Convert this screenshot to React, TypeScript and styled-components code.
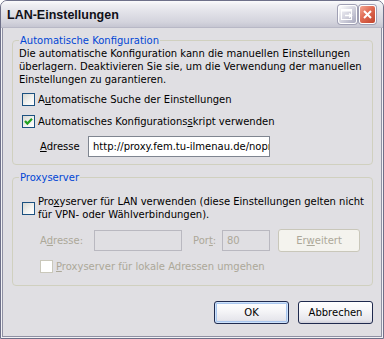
import React from "react";
import styled, { createGlobalStyle, css } from "styled-components";

const GlobalStyle = createGlobalStyle`
  html, body {
    margin: 0;
    padding: 0;
    background: #ffffff;
  }
  * {
    box-sizing: border-box;
  }
`;

const Window = styled.div`
  width: 384px;
  height: 339px;
  display: flex;
  flex-direction: column;
  border: 1px solid #6e7089;
  border-radius: 7px 7px 0 0;
  overflow: hidden;
  background: #e0dfe3;
  font-family: "DejaVu Sans", Tahoma, sans-serif;
  font-size: 10px;
  color: #000;
`;

const TitleBar = styled.div`
  height: 27px;
  flex: none;
  display: flex;
  align-items: center;
  padding: 0 7px 0 6px;
  background: linear-gradient(
    to bottom,
    #fbfbfc 0%,
    #eeeef2 15%,
    #e1e1e8 45%,
    #d4d4dd 80%,
    #c6c6d2 100%
  );
  border-bottom: 1px solid #b8b8c6;
`;

const Title = styled.span`
  flex: 1;
  font-family: "Liberation Sans", Arial, sans-serif;
  font-weight: bold;
  font-size: 12.5px;
  color: #101018;
  padding-top: 1px;
`;

const CaptionButton = styled.div<{ $close?: boolean }>`
  width: ${(p) => (p.$close ? 17 : 19)}px;
  height: 19px;
  margin-left: 2px;
  border-radius: 3px;
  border: 1px solid #ffffff;
  box-shadow: 0 0 0 1px #a0a0b4;
  display: flex;
  align-items: center;
  justify-content: center;
  background: ${(p) =>
    p.$close
      ? "linear-gradient(135deg, #f4a894 0%, #e06a52 45%, #c1442d 100%)"
      : "linear-gradient(135deg, #ffffff 0%, #d8d8e2 45%, #a8a8bd 100%)"};
`;

const Body = styled.div`
  flex: 1;
  display: flex;
  flex-direction: column;
  padding: 6px 9px 0 10px;
  border: 1px solid #f2f2f5;
  border-top: none;
  box-shadow: inset 1px 0 #8f90a3, inset -1px 0 #8f90a3, inset 0 -1px #8f90a3;
`;

const Group = styled.fieldset<{ $bottom: number; $top?: number }>`
  margin: ${(p) => p.$top ?? 0}px 0 0 0;
  padding: 0 6px ${(p) => p.$bottom}px 6px;
  border: 1px solid #d0d0bf;
  border-radius: 4px;
  min-width: 0;
`;

const Legend = styled.legend`
  margin-left: 0;
  padding: 0 1px;
  line-height: 13px;
  color: #0046d5;
`;

const Text = styled.div`
  line-height: 13px;
  white-space: nowrap;
`;

const CheckRow = styled.div<{ $indent: number; $top: number }>`
  display: flex;
  align-items: center;
  gap: 3px;
  margin-left: ${(p) => p.$indent}px;
  margin-top: ${(p) => p.$top}px;
  line-height: 13px;
  white-space: nowrap;
`;

const Box = styled.span<{ $disabled?: boolean }>`
  width: 13px;
  height: 13px;
  flex: none;
  display: flex;
  align-items: center;
  justify-content: center;
  border: 1px solid ${(p) => (p.$disabled ? "#cac8bb" : "#1c5180")};
  background: ${(p) =>
    p.$disabled
      ? "#ffffff"
      : "linear-gradient(135deg, #d8d8d2 0%, #f4f4f2 60%, #ffffff 100%)"};
`;

const Label = styled.span<{ $disabled?: boolean }>`
  color: ${(p) => (p.$disabled ? "#aca899" : "#000")};
  u {
    text-decoration: underline;
    text-underline-offset: 1px;
  }
`;

const FieldRow = styled.div<{ $indent: number; $top: number }>`
  display: flex;
  align-items: center;
  margin-left: ${(p) => p.$indent}px;
  margin-top: ${(p) => p.$top}px;
`;

const FieldLabel = styled(Label)<{ $width: number; $gap?: number }>`
  width: ${(p) => p.$width}px;
  margin-left: ${(p) => p.$gap ?? 0}px;
  flex: none;
`;

const Input = styled.div<{ $width: number; $disabled?: boolean }>`
  width: ${(p) => p.$width}px;
  height: 21px;
  flex: none;
  display: flex;
  align-items: center;
  padding-left: 4px;
  overflow: hidden;
  white-space: nowrap;
  ${(p) =>
    p.$disabled
      ? css`
          border: 1px solid #b9b8c0;
          background: #e0dfe3;
          color: #aca899;
        `
      : css`
          border: 1px solid #7f8590;
          background: #ffffff;
          color: #000;
        `}
`;

const Button = styled.div<{
  $width: number;
  $default?: boolean;
  $disabled?: boolean;
  $gap?: number;
}>`
  width: ${(p) => p.$width}px;
  height: 23px;
  margin-left: ${(p) => p.$gap ?? 0}px;
  flex: none;
  display: flex;
  align-items: center;
  justify-content: center;
  border-radius: 3px;
  ${(p) =>
    p.$disabled
      ? css`
          border: 1px solid #c9c7ba;
          background: #f4f3ee;
          color: #aca899;
        `
      : css`
          border: 1px solid #1f2a4e;
          background: linear-gradient(
            to bottom,
            #ffffff 0%,
            #f6f6f8 40%,
            #e6e6ec 85%,
            #cfcfd9 100%
          );
          color: #000;
        `}
  ${(p) =>
    p.$default &&
    css`
      box-shadow: inset 0 0 0 1px #cde2fb, inset 0 0 0 2px #a9c6ee;
    `}
`;

const Footer = styled.div`
  display: flex;
  justify-content: flex-end;
  gap: 9px;
  margin-top: 15px;
`;

function Check({ checked, disabled }: { checked?: boolean; disabled?: boolean }) {
  return (
    <Box $disabled={disabled}>
      {checked && (
        <svg width="9" height="9" viewBox="0 0 9 9">
          <path
            d="M1 4 L3.4 6.6 L8 1.8"
            fill="none"
            stroke="#21a121"
            strokeWidth="2.2"
          />
        </svg>
      )}
    </Box>
  );
}

export default function App() {
  return (
    <>
      <GlobalStyle />
      <Window>
        <TitleBar>
          <Title>LAN-Einstellungen</Title>
          <CaptionButton>
            <svg width="13" height="11" viewBox="0 0 13 11">
              <rect x="0.5" y="0.5" width="10" height="10" fill="none" stroke="#ffffff" />
              <rect x="0.5" y="0.5" width="10" height="2" fill="#ffffff" />
              <path d="M4 6.5 H10 M8 4.5 L10.5 6.5 L8 8.5" fill="none" stroke="#ffffff" strokeWidth="1.4" />
            </svg>
          </CaptionButton>
          <CaptionButton $close>
            <svg width="11" height="11" viewBox="0 0 11 11">
              <path d="M2 2 L9 9 M9 2 L2 9" stroke="#ffffff" strokeWidth="2" />
            </svg>
          </CaptionButton>
        </TitleBar>
        <Body>
          <Group $bottom={7}>
            <Legend>Automatische Konfiguration</Legend>
            <Text>
              Die automatische Konfiguration kann die manuellen Einstellungen
              <br />
              überlagern. Deaktivieren Sie sie, um die Verwendung der manuellen
              <br />
              Einstellungen zu garantieren.
            </Text>
            <CheckRow $indent={3} $top={7}>
              <Check />
              <Label>
                A<u>u</u>tomatische Suche der Einstellungen
              </Label>
            </CheckRow>
            <CheckRow $indent={3} $top={9}>
              <Check checked />
              <Label>
                Automatisches Konfigurations<u>s</u>kript verwenden
              </Label>
            </CheckRow>
            <FieldRow $indent={21} $top={8}>
              <FieldLabel $width={48}>
                <u>A</u>dresse
              </FieldLabel>
              <Input $width={182}>http://proxy.fem.tu-ilmenau.de/noproxy.pac</Input>
            </FieldRow>
          </Group>
          <Group $bottom={12} $top={6}>
            <Legend>Proxyserver</Legend>
            <CheckRow $indent={3} $top={11}>
              <Check />
              <Label>
                Pro<u>x</u>yserver für LAN verwenden (diese Einstellungen gelten nicht
                <br />
                für VPN- oder Wählverbindungen).
              </Label>
            </CheckRow>
            <FieldRow $indent={21} $top={8}>
              <FieldLabel $width={54} $disabled>
                A<u>d</u>resse:
              </FieldLabel>
              <Input $width={88} $disabled />
              <FieldLabel $width={29} $gap={11} $disabled>
                Por<u>t</u>:
              </FieldLabel>
              <Input $width={48} $disabled>
                80
              </Input>
              <Button $width={82} $gap={8} $disabled>
                Er<u>w</u>eitert
              </Button>
            </FieldRow>
            <CheckRow $indent={21} $top={8}>
              <Check disabled />
              <Label $disabled>
                <u>P</u>roxyserver für lokale Adressen umgehen
              </Label>
            </CheckRow>
          </Group>
          <Footer>
            <Button $width={75} $default>
              OK
            </Button>
            <Button $width={75}>Abbrechen</Button>
          </Footer>
        </Body>
      </Window>
    </>
  );
}
